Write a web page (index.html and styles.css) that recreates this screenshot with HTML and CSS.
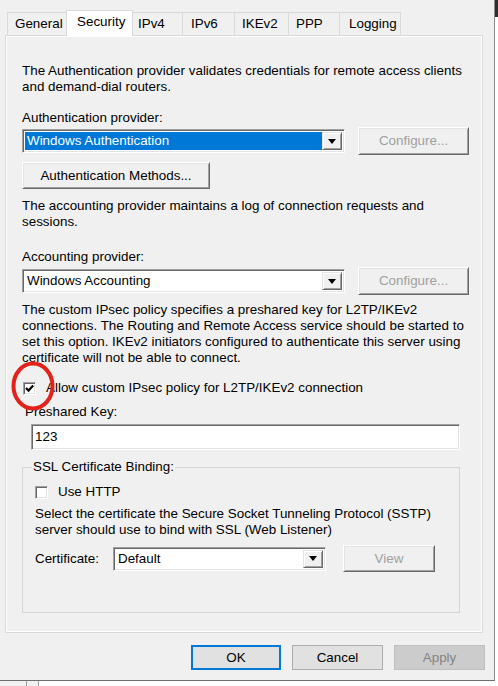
FILE: index.html
```html
<!DOCTYPE html>
<html>
<head>
<meta charset="utf-8">
<title>Security</title>
<link rel="stylesheet" href="styles.css">
</head>
<body>
<div class="screen">
  <div class="dialog">
    <div class="tabs">
      <div class="tab t-general">General</div>
      <div class="tab tab-active t-security">Security</div>
      <div class="tab t-ipv4">IPv4</div>
      <div class="tab t-ipv6">IPv6</div>
      <div class="tab t-ikev2">IKEv2</div>
      <div class="tab t-ppp">PPP</div>
      <div class="tab t-logging">Logging</div>
    </div>
    <div class="panel">
      <p class="para">The Authentication provider validates credentials for remote access clients<br>and demand-dial routers.</p>
      <div class="label l-auth">Authentication provider:</div>
      <div class="row row-auth">
        <div class="combo combo-wide">
          <div class="combo-text selected">Windows Authentication</div>
          <div class="combo-btn"><svg width="8" height="5" viewBox="0 0 8 5"><path d="M0 0h8l-4 5z" fill="#000"/></svg></div>
        </div>
        <div class="btn btn-configure disabled">Configure...</div>
      </div>
      <div class="btn btn-methods">Authentication Methods...</div>
      <p class="para p-acct">The accounting provider maintains a log of connection requests and<br>sessions.</p>
      <div class="label l-acct">Accounting provider:</div>
      <div class="row row-acct">
        <div class="combo combo-wide">
          <div class="combo-text">Windows Accounting</div>
          <div class="combo-btn"><svg width="8" height="5" viewBox="0 0 8 5"><path d="M0 0h8l-4 5z" fill="#000"/></svg></div>
        </div>
        <div class="btn btn-configure disabled">Configure...</div>
      </div>
      <p class="para p-ipsec">The custom IPsec policy specifies a preshared key for L2TP/IKEv2<br>connections. The Routing and Remote Access service should be started to<br>set this option. IKEv2 initiators configured to authenticate this server using<br>certificate will not be able to connect.</p>
      <div class="check-row check-ipsec">
        <span class="checkbox"><svg width="9" height="9" viewBox="0 0 9 9"><path d="M1 4 L3.5 6.6 L8.2 1.6" fill="none" stroke="#000" stroke-width="2.2"/></svg></span>
        <span class="check-label">Allow custom IPsec policy for L2TP/IKEv2 connection</span>
      </div>
      <div class="label l-key">Preshared Key:</div>
      <div class="field field-key">123</div>
      <fieldset class="group">
        <legend class="group-title">SSL Certificate Binding:</legend>
        <div class="check-row">
          <span class="checkbox"></span>
          <span class="check-label">Use HTTP</span>
        </div>
        <p class="para p-sstp">Select the certificate the Secure Socket Tunneling Protocol (SSTP)<br>server should use to bind with SSL (Web Listener)</p>
        <div class="row row-cert">
          <div class="cert-label">Certificate:</div>
          <div class="combo combo-cert">
            <div class="combo-text">Default</div>
            <div class="combo-btn"><svg width="8" height="5" viewBox="0 0 8 5"><path d="M0 0h8l-4 5z" fill="#000"/></svg></div>
          </div>
          <div class="btn btn-view disabled">View</div>
        </div>
      </fieldset>
      <svg class="highlight" width="44" height="50" viewBox="0 0 44 50"><ellipse cx="22" cy="25" rx="19.5" ry="22.5" fill="none" stroke="#e3231b" stroke-width="4"/></svg>
    </div>
    <div class="footer">
      <div class="dlg-btn btn-ok">OK</div>
      <div class="dlg-btn">Cancel</div>
      <div class="dlg-btn btn-apply">Apply</div>
    </div>
  </div>
  <div class="side">
    <div class="side-dark"></div>
  </div>
</div>
<div class="bottom">
  <div class="bottom-cell cell-a"></div>
  <div class="bottom-cell cell-b"></div>
  <div class="bottom-rest"></div>
</div>
</body>
</html>
```
FILE: styles.css
```css
* { box-sizing: border-box; }
html, body { margin: 0; padding: 0; }
body {
  width: 498px;
  height: 686px;
  overflow: hidden;
  background: #fff;
  font-family: "Liberation Sans", Arial, sans-serif;
  font-size: 13.4px;
  line-height: 16px;
  color: #000;
}
.screen { display: flex; height: 681px; }
.dialog {
  width: 495px;
  height: 681px;
  background: #f0f0f0;
  border-right: 1px solid #8c8c8c;
  border-bottom: 1px solid #6e6e6e;
  display: flex;
  flex-direction: column;
}
.side { flex: 1; background: #fff; }
.side-dark { height: 17px; background: #2e2e2e; }

/* tabs */
.tabs { display: flex; align-items: flex-end; height: 35px; padding-left: 7px; }
.tab {
  height: 23px;
  border: 1px solid #d9d9d9;
  border-bottom: none;
  background: #f0f0f0;
  padding-left: 7px;
  line-height: 22px;
  white-space: nowrap;
  margin-right: -1px;
}
.tab-active {
  height: 26px;
  background: #fff;
  margin-bottom: -1px;
  position: relative;
  z-index: 1;
  padding-left: 10px;
}
.t-general { width: 60px; }
.t-security { width: 67px; }
.t-ipv4 { width: 51px; padding-left: 5px; }
.t-ipv6 { width: 53px; padding-left: 8px; }
.t-ikev2 { width: 55px; }
.t-ppp { width: 52px; }
.t-logging { width: 62px; padding-left: 9px; }

/* panel */
.panel {
  position: relative;
  margin-left: 5px;
  width: 478px;
  height: 598px;
  border: 1px solid #d9d9d9;
  box-shadow: inset 0 0 0 1px #fff;
  padding: 27px 13px 0 16px;
}
.para { margin: 0; white-space: nowrap; }
.label { white-space: nowrap; }
.l-auth { margin-top: 15px; }
.row { display: flex; align-items: center; }
.row-auth { margin-top: 1px; height: 28px; }
.p-acct { margin-top: 9px; }
.l-acct { margin-top: 19px; }
.row-acct { margin-top: 2px; height: 28px; }
.p-ipsec { margin-top: 7px; }

/* sunken combo */
.combo {
  display: flex;
  height: 24px;
  border: 1px solid;
  border-color: #a0a0a0 #fff #fff #a0a0a0;
  box-shadow: inset 1px 1px 0 #696969, inset -1px -1px 0 #e3e3e3;
  background: #fff;
  padding: 1px;
}
.combo-wide { width: 323px; }
.combo-text {
  flex: 1;
  margin: 1px 0 1px 1px;
  padding-left: 2px;
  line-height: 18px;
  white-space: nowrap;
}
.combo-text.selected { background: #0078d7; color: #fff; }
.combo-btn {
  width: 20px;
  margin: 1px 1px 1px 0;
  background: #f0f0f0;
  border: 1px solid;
  border-color: #e3e3e3 #696969 #696969 #e3e3e3;
  box-shadow: inset 1px 1px 0 #fff, inset -1px -1px 0 #a0a0a0;
  display: flex;
  align-items: center;
  justify-content: center;
}

/* classic raised button */
.btn {
  background: #f0f0f0;
  border: 1px solid;
  border-color: #fff #696969 #696969 #fff;
  box-shadow: inset 1px 1px 0 #e3e3e3, inset -1px -1px 0 #a0a0a0;
  display: flex;
  align-items: center;
  justify-content: center;
  white-space: nowrap;
}
.btn.disabled { color: #a0a0a0; }
.btn-configure { width: 111px; height: 28px; margin-left: 13px; }
.btn-methods { width: 188px; height: 27px; margin-top: 7px; }

/* checkbox */
.check-row { display: flex; align-items: center; height: 16px; }
.check-ipsec { margin-top: 14px; padding-left: 1px; }
.checkbox {
  width: 13px;
  height: 13px;
  border: 1px solid;
  border-color: #a0a0a0 #fff #fff #a0a0a0;
  box-shadow: inset 1px 1px 0 #696969, inset -1px -1px 0 #e3e3e3;
  background: #fff;
  display: flex;
  align-items: center;
  justify-content: center;
  flex: none;
}
.check-label { margin-left: 10px; white-space: nowrap; }

.l-key { margin-top: 8px; padding-left: 3px; }
.field {
  margin-top: 4px;
  margin-left: 9px;
  width: 429px;
  height: 26px;
  border: 1px solid;
  border-color: #a0a0a0 #fff #fff #a0a0a0;
  box-shadow: inset 1px 1px 0 #696969, inset -1px -1px 0 #e3e3e3;
  background: #fff;
  padding-left: 3px;
  line-height: 23px;
}

/* group box */
.group {
  margin: 9px 0 0 0;
  width: 438px;
  min-width: 0;
  border: 1px solid #d5d5d5;
  padding: 9px 12px 40px 12px;
}
.group-title { padding: 0 1px; margin-left: -3px; line-height: 16px; }
.p-sstp { margin-top: 6px; }
.row-cert { margin-top: 7px; height: 27px; }
.cert-label { width: 78px; }
.combo-cert { width: 213px; }
.btn-view { width: 92px; height: 27px; margin-left: 17px; }

/* red highlight */
.highlight { position: absolute; left: 5px; top: 325px; }

/* dialog buttons */
.footer {
  display: flex;
  justify-content: flex-end;
  gap: 11px;
  margin-top: 12px;
  padding-right: 9px;
}
.dlg-btn {
  width: 91px;
  height: 25px;
  background: #e1e1e1;
  border: 1px solid #adadad;
  display: flex;
  align-items: center;
  justify-content: center;
}
.btn-ok { width: 90px; border: 2px solid #0078d7; }
.btn-apply { background: #cccccc; border-color: #bfbfbf; color: #838383; }

/* background below dialog */
.bottom { display: flex; height: 5px; }
.bottom-cell { background: #f0f0f0; border-right: 1px solid #a0a0a0; }
.cell-a { width: 27px; }
.cell-b { width: 12px; }
.bottom-rest { flex: 1; background: #fff; }
```
